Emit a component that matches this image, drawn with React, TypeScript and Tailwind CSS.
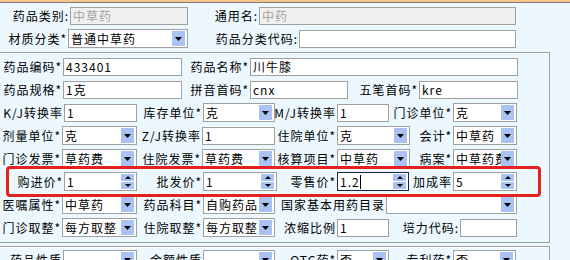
import type { ReactNode } from 'react'

// legacy drug-info form (中草药), 12px CJK text on a pale blue panel

function Label({ w, children }: { w: string; children: ReactNode }) {
  return (
    <div className={`${w} shrink-0 flex justify-end pr-[1px] whitespace-nowrap leading-[17px]`}>
      {children}
    </div>
  )
}

function Input({
  w,
  value = '',
  disabled = false,
  focused = false,
}: {
  w: string
  value?: string
  disabled?: boolean
  focused?: boolean
}) {
  return (
    <div
      className={`${w} h-[18px] shrink-0 border flex items-center pl-[2px] overflow-hidden whitespace-nowrap leading-[16px] ${
        focused ? 'border-[#1b2450]' : 'border-[#a0a0a0]'
      } ${disabled ? 'bg-[#f0f0f0] text-[#a4a4a4]' : 'bg-white'}`}
    >
      {value}
    </div>
  )
}

function DownArrow() {
  return (
    <svg width="7" height="4" viewBox="0 0 7 4">
      <polygon points="0,0 7,0 3.5,4" fill="#000" />
    </svg>
  )
}

function Select({ w, value = '' }: { w: string; value?: string }) {
  return (
    <div className={`${w} h-[19px] shrink-0 border border-[#a0a0a0] bg-white flex items-center`}>
      <span className="flex-1 min-w-0 overflow-hidden whitespace-nowrap pl-[2px] leading-[17px]">{value}</span>
      <div className="w-[13px] h-[15px] mr-[2px] bg-[#a7c2f3] flex items-center justify-center shrink-0">
        <DownArrow />
      </div>
    </div>
  )
}

function Spin({ w, value = '', focused = false }: { w: string; value?: string; focused?: boolean }) {
  return (
    <div
      className={`${w} h-[19px] shrink-0 border bg-white flex items-center ${
        focused ? 'border-[#1b2450]' : 'border-[#a0a0a0]'
      }`}
    >
      <span className="flex-1 min-w-0 flex items-center overflow-hidden whitespace-nowrap pl-[2px] leading-[17px]">
        {value}
        {focused && <span className="w-[1px] h-[14px] bg-black" />}
      </span>
      <div className="w-[13px] mr-[2px] flex flex-col gap-[1px] shrink-0">
        <div className="h-[7px] bg-[#a7c2f3] flex items-center justify-center">
          <svg width="6" height="3" viewBox="0 0 6 3">
            <polygon points="0,3 6,3 3,0" fill="#000" />
          </svg>
        </div>
        <div className="h-[7px] bg-[#a7c2f3] flex items-center justify-center">
          <svg width="6" height="3" viewBox="0 0 6 3">
            <polygon points="0,0 6,0 3,3" fill="#000" />
          </svg>
        </div>
      </div>
    </div>
  )
}

function Row({ children }: { children: ReactNode }) {
  return <div className="h-[19px] flex items-center">{children}</div>
}

export default function App() {
  return (
    <div className="relative w-[570px] h-[260px] overflow-hidden bg-[#ecf7fe] text-[12px] tracking-[1px] text-black font-['Noto_Sans_CJK_SC',sans-serif]">
      <div className="h-[2px] bg-[#f7c58c]" />
      <div className="h-[1px] bg-[#7c7c7c]" />

      <div className="pt-[3px] flex flex-col gap-[4px]">
        <Row>
          <Label w="w-[70px]">药品类别:</Label>
          <Input w="w-[118px]" value="中草药" disabled />
          <Label w="w-[71px]">通用名:</Label>
          <Input w="w-[257px]" value="中药" disabled />
        </Row>
        <Row>
          <Label w="w-[68px]">材质分类*</Label>
          <Select w="w-[120px]" value="普通中草药" />
          <Label w="w-[111px]">药品分类代码:</Label>
          <Input w="w-[217px]" />
        </Row>
      </div>

      {/* main group */}
      <div className="mt-[4px] w-[550px] border-t border-r border-b border-[#a0a0a0] shadow-[inset_0_1px_0_#ffffff] pt-[4px] pb-[5px] flex flex-col gap-[4px]">
        <Row>
          <Label w="w-[63px]">药品编码*</Label>
          <Input w="w-[119px]" value="433401" />
          <Label w="w-[68px]">药品名称*</Label>
          <Input w="w-[268px]" value="川牛膝" />
        </Row>
        <Row>
          <Label w="w-[63px]">药品规格*</Label>
          <Input w="w-[119px]" value="1克" />
          <Label w="w-[68px]">拼音首码*</Label>
          <Input w="w-[98px]" value="cnx" />
          <Label w="w-[71px]">五笔首码*</Label>
          <Input w="w-[99px]" value="kre" />
        </Row>
        <Row>
          <Label w="w-[64px]">K/J转换率</Label>
          <Input w="w-[73px]" value="1" />
          <Label w="w-[66px]">库存单位*</Label>
          <Select w="w-[72px]" value="克" />
          <Label w="w-[62px]">M/J转换率</Label>
          <Input w="w-[52px]" value="1" />
          <Label w="w-[64px]">门诊单位*</Label>
          <Select w="w-[64px]" value="克" />
        </Row>
        <Row>
          <Label w="w-[62px]">剂量单位*</Label>
          <Select w="w-[75px]" value="克" />
          <Label w="w-[65px]">Z/J转换率</Label>
          <Input w="w-[73px]" value="1" />
          <Label w="w-[62px]">住院单位*</Label>
          <Select w="w-[73px]" value="克" />
          <Label w="w-[43px]">会计*</Label>
          <Select w="w-[64px]" value="中草药" />
        </Row>
        <Row>
          <Label w="w-[62px]">门诊发票*</Label>
          <Select w="w-[75px]" value="草药费" />
          <Label w="w-[65px]">住院发票*</Label>
          <Select w="w-[73px]" value="草药费" />
          <Label w="w-[62px]">核算项目*</Label>
          <Select w="w-[73px]" value="中草药" />
          <Label w="w-[43px]">病案*</Label>
          <Select w="w-[64px]" value="中草药费" />
        </Row>
        <Row>
          <Label w="w-[64px]">购进价*</Label>
          <Spin w="w-[73px]" value="1" />
          <Label w="w-[66px]">批发价*</Label>
          <Spin w="w-[74px]" value="1" />
          <Label w="w-[60px]">零售价*</Label>
          <Spin w="w-[72px]" value="1.2" focused />
          <Label w="w-[44px]">加成率</Label>
          <Spin w="w-[64px]" value="5" />
        </Row>
        <Row>
          <Label w="w-[62px]">医嘱属性*</Label>
          <Select w="w-[75px]" value="中草药" />
          <Label w="w-[66px]">药品科目*</Label>
          <Select w="w-[72px]" value="自购药品" />
          <Label w="w-[111px]">国家基本用药目录</Label>
          <Select w="w-[131px]" />
        </Row>
        <Row>
          <Label w="w-[62px]">门诊取整*</Label>
          <Select w="w-[75px]" value="每方取整" />
          <Label w="w-[66px]">住院取整*</Label>
          <Select w="w-[72px]" value="每方取整" />
          <Label w="w-[62px]">浓缩比例</Label>
          <Input w="w-[52px]" value="1" />
          <Label w="w-[71px]">培力代码:</Label>
          <Input w="w-[57px]" />
        </Row>
      </div>

      {/* second group, cut off by the window */}
      <div className="mt-[3px] w-[550px] border-t border-r border-[#a0a0a0] shadow-[inset_0_1px_0_#ffffff] pt-[3px] flex flex-col gap-[4px]">
        <Row>
          <Label w="w-[63px]">药品性质</Label>
          <Select w="w-[74px]" />
          <Label w="w-[66px]">金额性质</Label>
          <Select w="w-[72px]" />
          <Label w="w-[62px]">OTC药*</Label>
          <Select w="w-[52px]" value="否" />
          <Label w="w-[64px]">专利药*</Label>
          <Select w="w-[63px]" value="否" />
        </Row>
      </div>

      {/* red annotation around the price row */}
      <div className="absolute left-[6px] top-[166px] w-[535px] h-[31px] border-[3px] border-[#e5211f] rounded-[4px] pointer-events-none" />
    </div>
  )
}
